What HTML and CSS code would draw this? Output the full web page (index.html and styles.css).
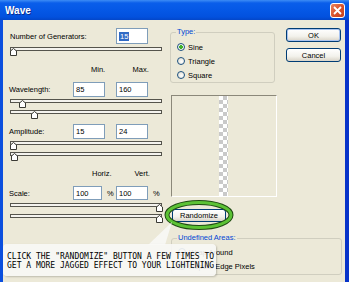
FILE: index.html
```html
<!DOCTYPE html>
<html>
<head>
    <title>Wave</title>
    <link rel="stylesheet" href="styles.css">
</head>
<body>
    <div class="window">
        <div class="titlebar">
            <span class="title">Wave</span>
            <span class="close">
                <svg width="9" height="9" viewBox="0 0 9 9"><path d="M1 1 L8 8 M8 1 L1 8" stroke="#fff" stroke-width="1.8"/></svg>
            </span>
        </div>

        <div class="body">
            <div class="params">
                <div class="row gen">
                    <span class="label wide">Number of Generators:</span>
                    <span class="field"><span class="sel">15</span></span>
                </div>
                <div class="slider mt3"><div class="track"></div><svg class="thumb" style="left:0px" viewBox="0 0 7 8"><polygon points="0.5,3 3.5,0.5 6.5,3 6.5,7.5 0.5,7.5"/></svg></div>

                <div class="heads mt8"><span class="head">Min.</span><span class="head second">Max.</span></div>

                <div class="row mt8">
                    <span class="label">Wavelength:</span>
                    <span class="field">85</span>
                    <span class="field gap">160</span>
                </div>
                <div class="slider"><div class="track"></div><svg class="thumb" style="left:9px" viewBox="0 0 7 8"><polygon points="0.5,3 3.5,0.5 6.5,3 6.5,7.5 0.5,7.5"/></svg></div>
                <div class="slider mt2"><div class="track"></div><svg class="thumb" style="left:21px" viewBox="0 0 7 8"><polygon points="0.5,3 3.5,0.5 6.5,3 6.5,7.5 0.5,7.5"/></svg></div>

                <div class="row mt5">
                    <span class="label">Amplitude:</span>
                    <span class="field">15</span>
                    <span class="field gap">24</span>
                </div>
                <div class="slider mt2"><div class="track"></div><svg class="thumb" style="left:0px" viewBox="0 0 7 8"><polygon points="0.5,3 3.5,0.5 6.5,3 6.5,7.5 0.5,7.5"/></svg></div>
                <div class="slider mt1"><div class="track"></div><svg class="thumb" style="left:1px" viewBox="0 0 7 8"><polygon points="0.5,3 3.5,0.5 6.5,3 6.5,7.5 0.5,7.5"/></svg></div>

                <div class="heads mt7"><span class="head wide-head">Horiz.</span><span class="head second">Vert.</span></div>

                <div class="row scale mt8">
                    <span class="label">Scale:</span>
                    <span class="field narrow">100</span><span class="pct">%</span>
                    <span class="field">100</span><span class="pct">%</span>
                </div>
                <div class="slider mt3"><div class="track"></div><svg class="thumb" style="left:146px" viewBox="0 0 7 8"><polygon points="0.5,3 3.5,0.5 6.5,3 6.5,7.5 0.5,7.5"/></svg></div>
                <div class="slider mt1"><div class="track"></div><svg class="thumb" style="left:146px" viewBox="0 0 7 8"><polygon points="0.5,3 3.5,0.5 6.5,3 6.5,7.5 0.5,7.5"/></svg></div>
            </div>

            <div class="side">
                <div class="top">
                    <fieldset class="group type">
                        <legend>Type:</legend>
                        <div class="radio"><span class="dot on"></span>Sine</div>
                        <div class="radio"><span class="dot"></span>Triangle</div>
                        <div class="radio"><span class="dot"></span>Square</div>
                    </fieldset>
                    <div class="buttons">
                        <button class="btn default">OK</button>
                        <button class="btn">Cancel</button>
                    </div>
                </div>

                <div class="preview"><div class="strip"></div></div>

                <button class="btn randomize">Randomize</button>

                <fieldset class="group undefined">
                    <legend>Undefined Areas:</legend>
                    <div class="radio"><span class="dot"></span>Wrap Around</div>
                    <div class="radio"><span class="dot on"></span>Repeat Edge Pixels</div>
                </fieldset>
            </div>
        </div>

        <!-- annotation overlay -->
        <svg class="ring" width="70" height="30" viewBox="0 0 70 30">
            <ellipse cx="35" cy="15" rx="32" ry="12.5" fill="none" stroke="#1f4a12" stroke-width="5"/>
            <ellipse cx="35" cy="15" rx="32" ry="12.5" fill="none" stroke="#5cc235" stroke-width="3"/>
        </svg>
        <svg class="pointer" width="30" height="26" viewBox="0 0 30 26">
            <polygon points="3,25 27,2 20,25"/>
        </svg>
        <div class="callout">
            CLICK THE "RANDOMIZE" BUTTON A FEW TIMES TO<br>
            GET A MORE JAGGED EFFECT TO YOUR LIGHTENING
        </div>
    </div>
</body>
</html>
```

FILE: styles.css
```css
body {
    margin: 0;
}
.window {
    position: relative;
    width: 349px;
    height: 282px;
    overflow: hidden;
    background-color: #ECE9D8;
    font-family: "Liberation Sans", Arial, sans-serif;
    font-size: 7.5px;
    color: #000;
}
.titlebar {
    height: 20px;
    display: flex;
    align-items: center;
    justify-content: space-between;
    padding: 0 4px 0 5px;
    background: linear-gradient(#3D8CF5 0, #0A5EEA 3px, #0558E6 50%, #0251DE 85%, #0346C8 100%);
}
.title {
    color: #fff;
    font-weight: bold;
    font-size: 10px;
    text-shadow: 1px 1px #0B2C8F;
}
.close {
    width: 15px;
    height: 15px;
    box-sizing: border-box;
    display: flex;
    align-items: center;
    justify-content: center;
    border: 1px solid #fff;
    border-radius: 3px;
    background: linear-gradient(135deg, #E9835E, #D8502A 55%, #C2421E);
}
.body {
    display: flex;
    height: 262px;
    box-sizing: border-box;
    border-left: 3px solid #0B4FDE;
    border-right: 4px solid #0733C9;
    padding-left: 6px;
}

/* left column */
.params {
    width: 154px;
    padding-top: 8px;
}
.row {
    display: flex;
    align-items: center;
    height: 15px;
}
.row.gen {
    height: 16px;
}
.row.scale {
    height: 14px;
}
.label {
    width: 64px;
}
.label.wide {
    width: 107px;
    padding-left: 1px;
    box-sizing: border-box;
}
.field {
    display: flex;
    align-items: center;
    width: 32px;
    height: 15px;
    box-sizing: border-box;
    border: 1px solid #7F9DB9;
    background: #fff;
    padding-left: 2px;
}
.row.gen .field {
    height: 16px;
}
.row.scale .field {
    height: 14px;
}
.field.gap {
    margin-left: 11px;
}
.field.narrow {
    width: 29px;
}
.pct {
    width: 14px;
    padding-left: 5px;
    box-sizing: border-box;
}
.sel {
    background: #316AC5;
    color: #fff;
    padding: 0 1px;
}
.heads {
    display: flex;
    height: 10px;
    align-items: center;
    padding-left: 73px;
}
.head {
    width: 43px;
    padding-left: 9px;
    box-sizing: border-box;
}
.head.wide-head {
    padding-left: 10px;
}
.head.second {
    padding-left: 10px;
}
.heads.mt7 .head.second {
    padding-left: 12px;
}
.slider {
    position: relative;
    width: 152px;
    height: 9px;
    margin-left: 1px;
}
.track {
    margin-top: 2px;
    height: 4px;
    box-sizing: border-box;
    border: 1px solid #55544c;
    background: #F4F3EE;
}
.thumb {
    position: absolute;
    top: 1px;
    width: 7px;
    height: 8px;
    fill: #fff;
    stroke: #3a3a34;
    stroke-width: 1;
}
.mt1 { margin-top: 1px; }
.mt2 { margin-top: 2px; }
.mt3 { margin-top: 3px; }
.mt5 { margin-top: 5px; }
.mt7 { margin-top: 7px; }
.mt8 { margin-top: 8px; }

/* right side */
.side {
    margin-left: 7px;
    width: 172px;
    padding-top: 7px;
}
.top {
    display: flex;
    gap: 11px;
}
.group {
    margin: 0;
    padding: 0 0 0 6px;
    border: 1px solid #D0CEBF;
    border-radius: 3px;
    box-sizing: border-box;
}
.group legend {
    color: #0046D5;
    padding: 0 1px;
    margin-left: -1px;
    line-height: 10px;
}
.group.type {
    width: 105px;
    height: 56px;
}
.radio {
    display: flex;
    align-items: center;
    gap: 3px;
    height: 14px;
}
.group.type .radio:first-of-type {
    margin-top: 3px;
}
.dot {
    width: 8px;
    height: 8px;
    box-sizing: border-box;
    border: 1px solid #1C5180;
    border-radius: 50%;
    background: radial-gradient(circle at 60% 60%, #fff, #DCD9CB);
}
.dot.on {
    background: radial-gradient(circle, #3FB02B 0 1.6px, #fff 2.2px, #DCD9CB);
}
.buttons {
    display: flex;
    flex-direction: column;
    gap: 6px;
    padding-top: 1px;
}
.btn {
    width: 55px;
    height: 14px;
    padding: 0;
    box-sizing: border-box;
    border: 1px solid #003C74;
    border-radius: 3px;
    background: linear-gradient(#FFFFFF, #F3F2EC 60%, #D9D4C8);
    font-family: "Liberation Sans", Arial, sans-serif;
    font-size: 7.5px;
    color: #000;
}
.btn.default {
    box-shadow: inset 0 0 0 1px #A8C3F0;
}
.preview {
    display: flex;
    width: 106px;
    height: 102px;
    margin: 12px 0 0 1px;
    box-sizing: border-box;
    border: 1px solid;
    border-color: #8B887A #fff #fff #8B887A;
    padding: 0 0 0 47px;
}
.strip {
    width: 9px;
    background-color: #fff;
    background-image: conic-gradient(#C9C9C9 25%, #fff 0 50%, #C9C9C9 0 75%, #fff 0);
    background-size: 8px 8px;
}
.btn.randomize {
    display: block;
    width: 54px;
    height: 13px;
    margin: 12px 0 0 2px;
}
.group.undefined {
    width: 171px;
    height: 42px;
    margin: 11px 0 0 1px;
}
.group.undefined .radio:first-of-type {
    margin-top: 2px;
}

/* annotation */
.ring {
    position: absolute;
    left: 164px;
    top: 200px;
}
.pointer {
    position: absolute;
    left: 145px;
    top: 220px;
    fill: rgba(248, 248, 246, 0.9);
}
.callout {
    position: absolute;
    left: 3px;
    top: 244px;
    width: 213px;
    height: 32px;
    box-sizing: border-box;
    padding: 8px 0 0 4px;
    border-radius: 4px;
    background: rgba(248, 248, 246, 0.9);
    box-shadow: 1px 1px 2px rgba(0, 0, 0, 0.2);
    font-family: "DejaVu Sans Mono", monospace;
    font-size: 8px;
    line-height: 9px;
    white-space: nowrap;
}
```
